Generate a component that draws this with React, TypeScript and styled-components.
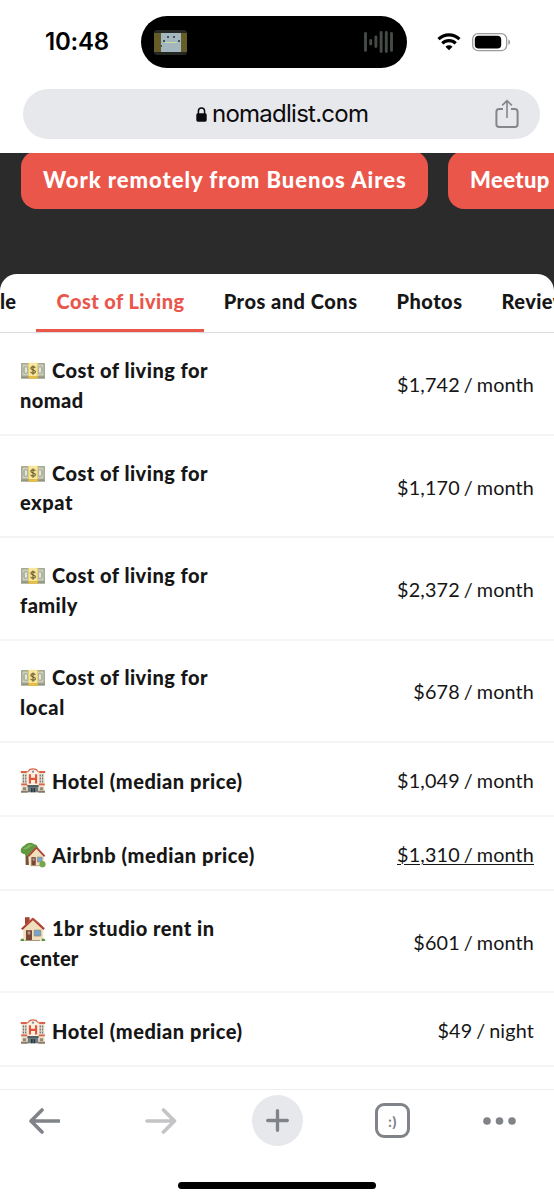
import React from "react";
import styled, { createGlobalStyle } from "styled-components";

const GlobalStyle = createGlobalStyle`
  * { box-sizing: border-box; }
  body { margin: 0; background: #fff; overflow: hidden; }
  svg { display: block; flex: none; }
`;

const Screen = styled.div`
  width: 554px;
  height: 1200px;
  display: flex;
  flex-direction: column;
  overflow: hidden;
  background: #fff;
  color: #161616;
  font-family: Lato, "Open Sans", sans-serif;
`;

/* ---------- status bar ---------- */
const StatusBar = styled.header`
  flex: none;
  height: 89px;
  padding: 16px 43px 0 45px;
  display: flex;
  align-items: flex-start;
`;

const Clock = styled.time`
  width: 96px;
  font: 600 24px/52px Inter, sans-serif;
  letter-spacing: -0.2px;
  color: #000;
  white-space: nowrap;
`;

const Island = styled.div`
  width: 267px;
  height: 52px;
  border-radius: 26px;
  background: #000;
  display: flex;
  align-items: center;
  justify-content: space-between;
  padding: 0 13px;
`;

const StatusIcons = styled.div`
  height: 52px;
  margin-left: 30px;
  display: flex;
  align-items: center;
  gap: 11px;
`;

/* ---------- address bar ---------- */
const AddressBar = styled.div`
  flex: none;
  height: 50px;
  margin: 0 14px 14px 23px;
  padding: 0 20px 0 173px;
  border-radius: 25px;
  background: #e7e8ec;
  display: flex;
  align-items: center;
`;

const Host = styled.span`
  flex: 1;
  margin-left: 5px;
  font: 400 24px/50px Inter, sans-serif;
  letter-spacing: -0.75px;
  color: #0b0b0d;
`;

/* ---------- page ---------- */
const Page = styled.main`
  flex: none;
  height: 936px;
  overflow: hidden;
  background: linear-gradient(#2b2b2b 0 150px, #fff 150px);
`;

const Actions = styled.div`
  height: 123px;
  margin-top: -2px;
  padding-left: 21px;
  display: flex;
  align-items: flex-start;
  gap: 20px;
`;

const ActionButton = styled.button<{ $width: number; $spacing: number }>`
  flex: none;
  width: ${(p) => p.$width}px;
  height: 58px;
  padding: 0 0 1px 22px;
  border: 0;
  border-radius: 16px;
  background: #eb564b;
  color: #fff;
  font: 900 22px/57px Lato, sans-serif;
  letter-spacing: ${(p) => p.$spacing}px;
  text-align: left;
  white-space: nowrap;
`;

const Card = styled.section`
  background: #fff;
  border-radius: 17px 17px 0 0;
  overflow: hidden;
`;

const Tabs = styled.nav`
  height: 59.4px;
  display: flex;
  border-bottom: 1px solid #dcdcdc;
`;

const Tab = styled.a<{ $width: number; $spacing: number; $active?: boolean }>`
  flex: none;
  width: ${(p) => p.$width}px;
  height: 58px;
  padding: 0 19.5px 2px 0;
  display: flex;
  justify-content: flex-end;
  border-bottom: 3px solid ${(p) => (p.$active ? "#eb564b" : "transparent")};
  color: ${(p) => (p.$active ? "#e9574c" : "#161616")};
  font-size: 20px;
  font-weight: 900;
  line-height: 54px;
  letter-spacing: ${(p) => p.$spacing}px;
  white-space: nowrap;
`;

const Row = styled.div<{ $tall: boolean }>`
  height: ${(p) => (p.$tall ? 102.4 : 74)}px;
  padding: 3px 20px 0;
  border-bottom: 2px solid #f4f4f4;
  display: flex;
  align-items: center;
  justify-content: space-between;
`;

const Label = styled.div`
  padding-top: 2px;
  font-size: 20px;
  font-weight: 900;
  line-height: 29.8px;
`;

const Line = styled.div<{ $spacing: number }>`
  display: flex;
  align-items: center;
  gap: 6px;
  letter-spacing: ${(p) => p.$spacing}px;
  white-space: nowrap;
`;

const Value = styled.div<{ $link?: boolean }>`
  font-size: 19.8px;
  font-weight: 400;
  line-height: 29.6px;
  letter-spacing: 0.15px;
  word-spacing: -1.3px;
  text-decoration: ${(p) => (p.$link ? "underline" : "none")};
  text-decoration-thickness: 1px;
  text-underline-offset: 2px;
  white-space: nowrap;
`;

/* ---------- bottom toolbar ---------- */
const Toolbar = styled.footer`
  flex: none;
  height: 111px;
  border-top: 1px solid #eceff0;
  background: #fff;
  display: flex;
  flex-direction: column;
  align-items: center;
  justify-content: space-between;
  padding: 5px 0 11px;
`;

const ToolRow = styled.div`
  width: 100%;
  height: 51px;
  padding-left: 28px;
  display: grid;
  grid-template-columns: 117px 107px 123px 108px 33px;
  align-items: center;
`;

const NewTab = styled.div`
  width: 51px;
  height: 51px;
  border-radius: 50%;
  background: #e7e8ec;
  display: flex;
  align-items: center;
  justify-content: center;
`;

const TabCount = styled.div`
  width: 35px;
  height: 35px;
  border: 3px solid #808388;
  border-radius: 9px;
  color: #808388;
  font: 600 14px/31px Inter, sans-serif;
  text-align: center;
`;

const HomeIndicator = styled.div`
  width: 198px;
  height: 7px;
  border-radius: 4px;
  background: #000;
`;

/* ---------- drawings ---------- */
const Thumb = () => (
  <svg width="33" height="25" viewBox="0 0 33 25">
    <rect width="33" height="25" rx="3" fill="#242722" />
    <path d="M0 3h7v19H0zM27 3h6v19h-6z" fill="#655c28" />
    <rect x="7" y="3" width="20" height="19" fill="#a4b7be" />
    <path d="M11 12h12v1H11z" fill="#c8dc9c" />
    <path d="M13 6h2v2h-2zM19 6h2v2h-2zM9 10h2v2H9zM24 10h2v2h-2zM7 15h1v2H7z" fill="#27343a" opacity=".75" />
  </svg>
);

const Wave = () => (
  <svg width="30" height="24" viewBox="0 0 30 24" stroke="#454b46" strokeWidth="2.9" strokeLinecap="round">
    <path d="M1.5 3.4v17M6.7 10.5v3.5M11.9 7v9.5M17.1 2.5v19M22.3 2.5v19M27.5 3.4v17" />
  </svg>
);

const Wifi = () => (
  <svg width="24" height="18" viewBox="0 0 24 18" fill="none" stroke="#000" strokeWidth="3.1">
    <path d="M1.5 6.2a15 15 0 0 1 21 0" />
    <path d="M5.3 10.3a9.6 9.6 0 0 1 13.4 0" />
    <path d="M8.5 13.8a5 5 0 0 1 7 0L12 17.3z" fill="#000" stroke="none" />
  </svg>
);

const Battery = () => (
  <svg width="39" height="19" viewBox="0 0 39 19">
    <rect x=".7" y=".7" width="34" height="17" rx="5.5" fill="#fff" stroke="#9b9b9b" strokeWidth="1.3" />
    <rect x="2.8" y="2.8" width="26.4" height="12.8" rx="3.8" fill="#000" />
    <path d="M36.4 6.5c2.3.7 2.3 4.7 0 5.4z" fill="#9b9b9b" />
  </svg>
);

const Lock = () => (
  <svg width="11" height="15" viewBox="0 0 11 15">
    <path d="M2.4 7V4.2a3.1 3.1 0 0 1 6.2 0V7" fill="none" stroke="#0b0b0d" strokeWidth="1.5" />
    <rect x=".3" y="6.2" width="10.4" height="8.5" rx="1.6" fill="#0b0b0d" />
  </svg>
);

const Share = () => (
  <svg width="26" height="30" viewBox="0 0 26 30" fill="none" stroke="#84868b" strokeWidth="2">
    <path d="M9 10H5.2A2.8 2.8 0 0 0 2.4 12.8v12.4A2.8 2.8 0 0 0 5.2 28h15.6a2.8 2.8 0 0 0 2.8-2.8V12.8a2.8 2.8 0 0 0-2.8-2.8H17" />
    <path d="M13 19V2M8.2 6.4 13 1.6l4.8 4.8" strokeWidth="1.6" />
  </svg>
);

const Arrow = ({ forward }: { forward?: boolean }) => (
  <svg width="32" height="26" viewBox="0 0 32 26" fill="none" stroke={forward ? "#c4c4c6" : "#808388"} strokeWidth="3.6" strokeLinecap="round" strokeLinejoin="round">
    <path d={forward ? "M2 13h27M18.5 2 29.5 13l-11 11" : "M31 13H3.5M14 2 3 13l11 11"} />
  </svg>
);

const Plus = () => (
  <svg width="23" height="23" viewBox="0 0 23 23" stroke="#808388" strokeWidth="3.3" strokeLinecap="round">
    <path d="M1.7 11.5h19.6M11.5 1.7v19.6" />
  </svg>
);

const Dots = () => (
  <svg width="33" height="8" viewBox="0 0 33 8" fill="#808388">
    <circle cx="4" cy="4" r="3.8" />
    <circle cx="16.5" cy="4" r="3.8" />
    <circle cx="29" cy="4" r="3.8" />
  </svg>
);

const Money = () => (
  <svg width="26" height="26" viewBox="0 0 26 26">
    <path d="M1 5h24v15.6H1z" fill="#b4b6a0" />
    <path d="M2 6h22v12H2z" fill="#d0d2bf" stroke="#8e927d" strokeWidth=".7" />
    <path d="M1 18.6h24v1.8H1z" fill="#93967f" />
    <ellipse cx="6" cy="12" rx="3.2" ry="4.2" fill="#b0b4a3" />
    <ellipse cx="20" cy="12" rx="3.2" ry="4.2" fill="#b0b4a3" />
    <path d="M5 9.5h2v5H5zM19 9.5h2v5h-2z" fill="#e4e6d8" />
    <path d="M8.5 4.8h9.2v13.4H8.5z" fill="#f7e6a0" />
    <path d="M8.5 18.2h9.2v2.4H8.5z" fill="#f0bf35" />
    <path d="M8.5 5v13M17.7 5v13" stroke="#e9cb62" />
    <circle cx="13" cy="12" r="4.2" fill="#efdf9b" />
    <path d="M15.3 9.8c-.6-1.5-4.4-1.5-4.4.4 0 2.2 4.5 1.3 4.5 3.5 0 2-4.1 1.9-4.8.2M13 7.4v9.4" fill="none" stroke="#665a28" strokeWidth="1.1" />
  </svg>
);

const HotelIcon = () => (
  <svg width="26" height="26" viewBox="0 0 26 26">
    <path d="M1.5 4h23v20h-23z" fill="#eee2cf" />
    <path d="M7.2 3.4Q8.8 3 9.5 1.6q3.5-1.8 7 0 .7 1.4 2.3 1.8V17H7.2z" fill="#fbf0df" />
    <path d="M7 4c1.4 0 1.8-2 3.2-2.6a8 8 0 0 1 5.6 0C17.2 2 17.6 4 19 4" fill="none" stroke="#d8624a" strokeWidth="1.2" />
    <path d="M.8 3h6v1.9h-6zM19.2 3h6v1.9h-6zM1.2 15.6h6v1.6h-6zM18.8 15.6h6v1.6h-6z" fill="#d8624a" />
    <circle cx="13" cy="3.7" r="1.1" fill="#7c8c96" />
    <path d="M2.8 6.5h1.3v2H2.8zm2.3 0h1.3v2H5.1zm-2.3 3h1.3v2H2.8zm2.3 0h1.3v2H5.1zm-2.3 3h1.3v2H2.8zm2.3 0h1.3v2H5.1zM19.6 6.5h1.3v2h-1.3zm2.3 0h1.3v2h-1.3zm-2.3 3h1.3v2h-1.3zm2.3 0h1.3v2h-1.3zm-2.3 3h1.3v2h-1.3zm2.3 0h1.3v2h-1.3z" fill="#6c747b" />
    <path d="M9.9 6.2v9.4M16.1 6.2v9.4M9.9 10.9h6.2" stroke="#e2523d" strokeWidth="2.1" />
    <path d="M7.8 17.2h10.4v7.1H7.8z" fill="#6d7a80" />
    <path d="M7.3 17.2h11.4v1.6H7.3z" fill="#4c5659" />
    <path d="M11 20h1.6v4.3H11zM13.5 20h1.6v4.3h-1.6z" fill="#2d373c" />
    <path d="M2.8 19.3h3.4v3H2.8zM19.8 19.3h3.4v3h-3.4z" fill="#958a77" />
    <path d="M1 22.8h6.8v2H1zM18.2 22.8H25v2h-6.8z" fill="#8a7965" />
  </svg>
);

const House = ({ tree }: { tree?: boolean }) => (
  <svg width="26" height="26" viewBox="0 0 26 26">
    {tree && (
      <>
        <path d="M5.5 11h2.8l.6 12H5.7z" fill="#795033" />
        <path d="M1.2 10.5C-.5 7 2.3 4.8 4.5 3.6 7.3.2 11.8.2 14 2.3c3 0 4.7 2.8 3.2 5.2L9 14c-2.6-.1-3.7-.8-4.6-2.1-1.3.2-2.5-.3-3.2-1.4z" fill="#629842" />
        <path d="M3 7c1.6-2 3.6-1.1 4.3-3.1 2-1.5 4.6-1.6 6.2-.3-3 0-3.3 2.3-5.2 2.6C6.6 6.5 5.6 8 3 7z" fill="#83b45c" />
      </>
    )}
    <g transform={tree ? "translate(7 3.2) scale(.73 .84)" : undefined}>
      {!tree && <path d="M5 1.2h4.6v7H5z" fill="#a84233" />}
      <path d="M3.2 12 13.2 3.6 23.2 12v12.3h-20z" fill="#f0dfbd" />
      <path d="M1.8 13.2 12.9 2.8l11.2 10.3" fill="none" stroke="#a63d32" strokeWidth="2.2" strokeLinejoin="round" />
      <path d="m2 12.1 10.9-10L24 12.1" fill="none" stroke="#ce6c56" strokeWidth=".7" />
      <path d="M6 14.2h6v10H6z" fill="#7b4635" />
      <path d="M7.7 15.5h2.6v3H7.7z" fill="#b2a090" />
      <path d="M14.2 14.2h6.5V20h-6.5z" fill="#72a5d4" stroke="#97846c" strokeWidth=".8" />
      <path d="M5 24h15v1H5z" fill="#a79776" />
    </g>
    {tree ? (
      <circle cx="22.5" cy="22.2" r="3.1" fill="#79a54b" />
    ) : (
      <path d="M.5 25c-.3-3 3.2-3.8 4 0zM21.3 25c.3-3.8 4.3-3 4 0z" fill="#5b9141" />
    )}
  </svg>
);

type Kind = "money" | "hotel" | "tree" | "house";
const icons: Record<Kind, React.ReactNode> = {
  money: <Money />,
  hotel: <HotelIcon />,
  tree: <House tree />,
  house: <House />,
};

type Item = { icon: Kind; first: string; ls: number; second?: string; ls2?: number; value: string; link?: boolean };

const items: Item[] = [
  { icon: "money", first: "Cost of living for", ls: 0.48, second: "nomad", ls2: 0.45, value: "$1,742 / month" },
  { icon: "money", first: "Cost of living for", ls: 0.48, second: "expat", ls2: 0.55, value: "$1,170 / month" },
  { icon: "money", first: "Cost of living for", ls: 0.48, second: "family", ls2: 0.42, value: "$2,372 / month" },
  { icon: "money", first: "Cost of living for", ls: 0.48, second: "local", ls2: 0.65, value: "$678 / month" },
  { icon: "hotel", first: "Hotel (median price)", ls: 0.53, value: "$1,049 / month" },
  { icon: "tree", first: "Airbnb (median price)", ls: 0.55, value: "$1,310 / month", link: true },
  { icon: "house", first: "1br studio rent in", ls: 0.5, second: "center", ls2: 0.25, value: "$601 / month" },
  { icon: "hotel", first: "Hotel (median price)", ls: 0.53, value: "$49 / night" },
];

export default function App() {
  return (
    <Screen>
      <GlobalStyle />
      <StatusBar>
        <Clock>10:48</Clock>
        <Island>
          <Thumb />
          <Wave />
        </Island>
        <StatusIcons>
          <Wifi />
          <Battery />
        </StatusIcons>
      </StatusBar>
      <AddressBar>
        <Lock />
        <Host>nomadlist.com</Host>
        <Share />
      </AddressBar>
      <Page>
        <Actions>
          <ActionButton $width={407} $spacing={0.95}>Work remotely from Buenos Aires</ActionButton>
          <ActionButton $width={160} $spacing={0.4}>Meetup</ActionButton>
        </Actions>
        <Card>
          <Tabs>
            <Tab $width={36} $spacing={0.4}>le</Tab>
            <Tab $width={168} $spacing={0.42} $active>Cost of Living</Tab>
            <Tab $width={173} $spacing={0.5}>Pros and Cons</Tab>
            <Tab $width={105} $spacing={0.5}>Photos</Tab>
            <Tab $width={116} $spacing={0.4}>Reviews</Tab>
          </Tabs>
          {items.map((item, i) => (
            <Row key={i} $tall={!!item.second}>
              <Label>
                <Line $spacing={item.ls}>
                  {icons[item.icon]}
                  <span>{item.first}</span>
                </Line>
                {item.second && <Line $spacing={item.ls2 ?? 0}>{item.second}</Line>}
              </Label>
              <Value $link={item.link}>{item.value}</Value>
            </Row>
          ))}
        </Card>
      </Page>
      <Toolbar>
        <ToolRow>
          <Arrow />
          <Arrow forward />
          <NewTab>
            <Plus />
          </NewTab>
          <TabCount>:)</TabCount>
          <Dots />
        </ToolRow>
        <HomeIndicator />
      </Toolbar>
    </Screen>
  );
}
